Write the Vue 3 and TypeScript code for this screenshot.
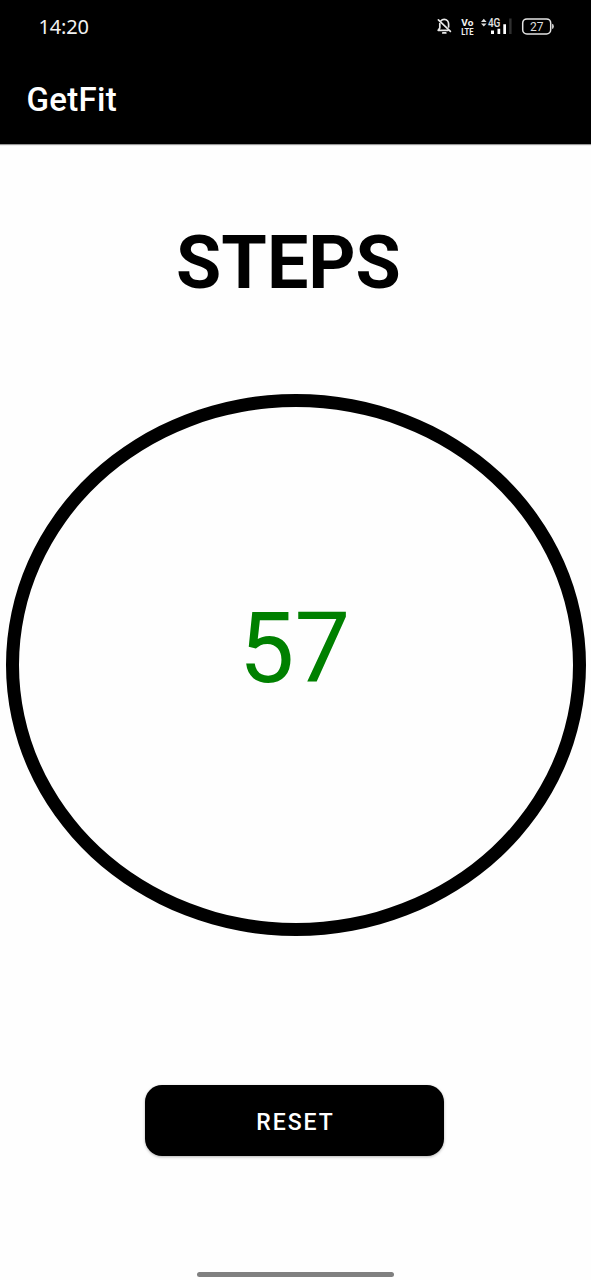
<script setup lang="ts">
import { ref } from 'vue'

const steps = ref<number>(57)
const batteryLevel = 27

function reset(): void {
  steps.value = 0
}
</script>

<template>
  <div class="screen">
    <header class="top">
      <div class="status">
        <span class="clock">14:20</span>
        <svg class="indicators" width="130" height="34" viewBox="0 0 130 34" fill="none">
          <!-- muted bell -->
          <g stroke="#e8e8e8" stroke-width="1.7" stroke-linecap="round" stroke-linejoin="round">
            <path d="M10.8 11C11.8 9.8 12.8 9.3 14.2 9.3C17 9.3 18.6 11.5 18.6 14V17" />
            <path d="M9.8 13.5V18L8.2 20.3H18" />
            <path d="M8.4 9.8L20.4 21.4" />
            <path d="M12.8 22.9H15.8" />
          </g>
          <!-- VoLTE -->
          <text class="volte" x="31.3" y="15.9" textLength="12" lengthAdjust="spacingAndGlyphs">Vo</text>
          <text class="volte" x="31.3" y="25" textLength="12.2" lengthAdjust="spacingAndGlyphs">LTE</text>
          <!-- data activity and signal -->
          <path d="M51 12L53.8 8.8L56.6 12ZM51 13.6L53.8 16.6L56.6 13.6Z" fill="#dedede" />
          <text class="network" x="57.9" y="17" textLength="12.5" lengthAdjust="spacingAndGlyphs">4G</text>
          <path d="M61 20.5H64V24H61ZM67.5 18.8H70.2V24H67.5ZM73.3 14.2H76V24H73.3Z" fill="#fff" />
          <path d="M79.2 8.5H81.6V24H79.2Z" fill="#303030" />
          <!-- battery -->
          <rect x="92.7" y="8.9" width="28" height="15" rx="4.2" stroke="#e4e4e4" stroke-width="1.5" />
          <path d="M122.1 13.8Q123.8 14 123.8 16.4T122.1 19Z" fill="#e4e4e4" />
          <text class="level" x="106.8" y="20.6" text-anchor="middle">{{ batteryLevel }}</text>
        </svg>
      </div>
      <h1 class="title">GetFit</h1>
    </header>

    <main class="content">
      <h2 class="heading">STEPS</h2>
      <div class="ring">
        <span class="count">{{ steps }}</span>
      </div>
      <button class="reset" type="button" @click="reset">RESET</button>
    </main>

    <div class="home-bar"></div>
  </div>
</template>

<style>
body {
  margin: 0;
  background: #fff;
}
</style>

<style scoped>
.screen {
  display: flex;
  flex-direction: column;
  width: 591px;
  height: 1280px;
  overflow: hidden;
  background: #fefefe;
  font-family: Roboto, "Liberation Sans", sans-serif;
}

.top {
  box-sizing: border-box;
  flex: none;
  height: 144px;
  background: #000;
  color: #fff;
  box-shadow: 0 1px 1px rgba(0, 0, 0, 0.4);
}

.status {
  display: flex;
  justify-content: space-between;
  padding: 10px 31px 0 38.5px;
  height: 44px;
  box-sizing: border-box;
}

.clock {
  font: 20px/34px "Noto Sans", sans-serif;
  letter-spacing: -0.2px;
  color: #f2f2f2;
}

.indicators {
  display: block;
}

.volte {
  font: 700 9.8px Roboto, sans-serif;
  fill: #f0f0f0;
}

.network {
  font: 500 12px Roboto, sans-serif;
  fill: #e4e4e4;
}

.level {
  font: 12px Roboto, sans-serif;
  fill: #dedede;
}

.title {
  margin: 36px 0 0 26.5px;
  font-size: 33px;
  font-weight: 500;
  line-height: 40px;
  letter-spacing: 0.3px;
}

.content {
  display: flex;
  flex-direction: column;
  align-items: center;
}

.heading {
  margin: 75px 14px 0 0;
  font-size: 73.5px;
  font-weight: 700;
  line-height: 88px;
  color: #000;
}

.ring {
  box-sizing: border-box;
  display: flex;
  justify-content: center;
  width: 580px;
  height: 542px;
  margin: 87px 0 0 1px;
  padding: 181px 3px 0 0;
  border: 13px solid #000;
  border-radius: 50%;
}

.count {
  height: 120px;
  font-size: 99px;
  line-height: 120px;
  color: #008000;
}

.reset {
  width: 299px;
  height: 71px;
  margin: 149px 2px 0 0;
  padding: 4px 0 0 2px;
  border: 0;
  border-radius: 17px;
  background: #000;
  color: #fff;
  font: 500 23px/28px Roboto, sans-serif;
  letter-spacing: 2px;
  box-shadow: 0 1px 3px rgba(0, 0, 0, 0.3);
}

.home-bar {
  flex: none;
  width: 197px;
  height: 5px;
  margin: auto 0 3px 197px;
  border-radius: 3px;
  background: #808080;
}
</style>
